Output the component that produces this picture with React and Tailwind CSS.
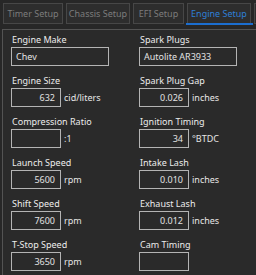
import React from 'react';

const tabs = [
    { name: 'Timer Setup', w: 'w-[60px]' },
    { name: 'Chassis Setup', w: 'w-[64px]' },
    { name: 'EFI Setup', w: 'w-[51px]' },
    { name: 'Engine Setup', w: 'w-[64px]', active: true },
    { name: '', w: 'w-[64px]' },
];

const left = [
    { label: 'Engine Make', value: 'Chev', wide: true },
    { label: 'Engine Size', value: '632', unit: 'cid/liters' },
    { label: 'Compression Ratio', value: '', unit: ':1' },
    { label: 'Launch Speed', value: '5600', unit: 'rpm' },
    { label: 'Shift Speed', value: '7600', unit: 'rpm' },
    { label: 'T-Stop Speed', value: '3650', unit: 'rpm' },
];

const right = [
    { label: 'Spark Plugs', value: 'Autolite AR3933', wide: true },
    { label: 'Spark Plug Gap', value: '0.026', unit: 'inches' },
    { label: 'Ignition Timing', value: '34', unit: '°BTDC' },
    { label: 'Intake Lash', value: '0.010', unit: 'inches' },
    { label: 'Exhaust Lash', value: '0.012', unit: 'inches' },
    { label: 'Cam Timing', value: '' },
];

const Field = ({ label, value, unit, wide }) => (
    <div className="mb-[7px]">
        <div className="h-[15px] leading-[15px] pl-[1px] text-[#ececec] whitespace-nowrap">{label}</div>
        <div className="flex items-center h-[19px]">
            <div
                className={`h-[19px] border border-[#b4b4b4] leading-[17px] whitespace-nowrap overflow-hidden ${
                    wide ? 'w-[98px] pl-[4px] text-left' : 'w-[50px] pr-[5px] text-right'
                }`}
            >
                {value}
            </div>
            {unit && <span className="ml-[3px] text-[#e6e6e6]">{unit}</span>}
        </div>
    </div>
);

export default function App() {
    return (
        <div
            className="w-[256px] h-[275px] overflow-hidden bg-[#272727] text-[9px] text-[#e2e2e2]"
            style={{ fontFamily: '"Noto Sans", "Open Sans", sans-serif' }}
        >
            {/* tab strip, last tab runs off the edge */}
            <div className="flex gap-[3px] pl-[3px] pt-[3px] h-[29px]">
                {tabs.map((t, i) => (
                    <div key={i} className="relative shrink-0">
                        <div
                            className={`${t.w} h-[21px] border border-[#474747] bg-[#2d2d2d] flex items-center justify-center whitespace-nowrap ${
                                t.active ? 'text-[#2d7fd6]' : 'text-[#7c7c7c]'
                            }`}
                        >
                            {t.name}
                        </div>
                        {t.active && (
                            <div className="absolute left-[-1px] right-[-2px] top-[20px] h-[2px] bg-[#1b6ed0]" />
                        )}
                    </div>
                ))}
            </div>

            {/* panel */}
            <div className="ml-[2px] w-[260px] h-[260px] border-l border-t border-[#535353] bg-[#2a2a2a] pt-[2px] pl-[8px] flex">
                <div className="w-[128px]">
                    {left.map((f) => (
                        <Field key={f.label} {...f} />
                    ))}
                </div>
                <div className="w-[120px]">
                    {right.map((f) => (
                        <Field key={f.label} {...f} />
                    ))}
                </div>
            </div>
        </div>
    );
}
